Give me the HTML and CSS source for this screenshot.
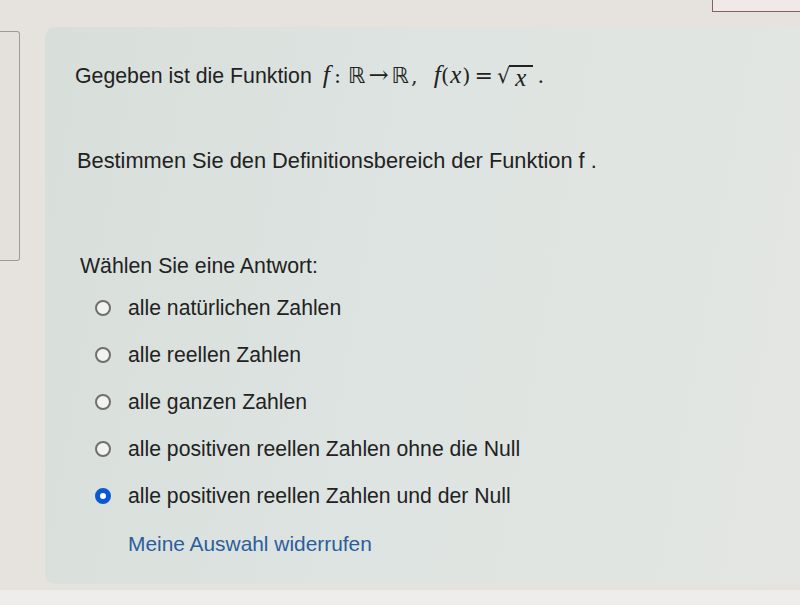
FILE: index.html
```html
<!DOCTYPE html>
<html lang="de">
<head>
<meta charset="utf-8">
<link rel="stylesheet" href="styles.css">
</head>
<body>
<div class="screen">
  <div class="side-box"></div>
  <div class="card">
    <p class="q-line first">Gegeben ist die Funktion <span class="math"><i class="mi">f</i><span class="mo colon">:</span><span class="ds">ℝ</span><span class="mo arrow">→</span><span class="ds">ℝ</span><span class="mo comma">,</span><span class="msp"></span><i class="mi">f</i><span class="mo">(</span><i class="mi x">x</i><span class="mo">)</span><span class="mo eq">=</span><span class="sqrt"><span class="rad">√</span><span class="under"><i class="mi x">x</i></span></span><span class="mo dot">.</span></span></p>
    <p class="q-line second">Bestimmen Sie den Definitionsbereich der Funktion f .</p>
    <p class="prompt">Wählen Sie eine Antwort:</p>
    <ul class="answers">
      <li class="answer"><span class="radio"></span><span>alle natürlichen Zahlen</span></li>
      <li class="answer"><span class="radio"></span><span>alle reellen Zahlen</span></li>
      <li class="answer"><span class="radio"></span><span>alle ganzen Zahlen</span></li>
      <li class="answer"><span class="radio"></span><span>alle positiven reellen Zahlen ohne die Null</span></li>
      <li class="answer"><span class="radio checked"></span><span>alle positiven reellen Zahlen und der Null</span></li>
    </ul>
    <a class="undo" href="#">Meine Auswahl widerrufen</a>
  </div>
  <div class="flag-box"></div>
</div>
</body>
</html>
```

FILE: styles.css
```css
html, body {
  margin: 0;
  padding: 0;
}
body {
  width: 800px;
  height: 605px;
  overflow: hidden;
  background: #e6e3de;
  font-family: "Liberation Sans", Arial, sans-serif;
  color: #222222;
}
.screen {
  position: relative;
  display: flex;
  align-items: flex-start;
  height: 590px;
  border-bottom: 15px solid #efede9;
}
.side-box {
  flex: 0 0 19px;
  height: 228px;
  margin-top: 31px;
  border: 1px solid #9e9c98;
  border-left: none;
  border-radius: 0 3px 3px 0;
  background: #e4e1dc;
}
.card {
  flex: 1;
  margin-left: 25px;
  margin-top: 27px;
  height: 557px;
  box-sizing: border-box;
  padding: 34px 0 0 30px;
  background: linear-gradient(100deg, #d8dfdb 0%, #dee4e1 50%, #e3e6e3 100%);
  border-radius: 10px 0 0 10px;
  display: flex;
  flex-direction: column;
  align-items: flex-start;
}
.q-line {
  margin: 0;
  font-size: 21.3px;
  line-height: 28px;
}
.second {
  margin-top: 57px;
  padding-left: 2px;
  font-size: 21.8px;
}
.math {
  font-family: "Liberation Serif", "DejaVu Serif", serif;
  font-size: 26px;
  margin-left: 5px;
}
.mi {
  font-style: italic;
}
.mi.x {
  font-size: 25px;
  padding: 0 1px;
}
.mo {
  font-family: "DejaVu Serif", serif;
  font-size: 21px;
}
.colon { margin: 0 7px 0 4px; }
.arrow { margin: 0 3px; font-size: 24px; }
.eq { margin: 0 2px 0 4px; font-size: 22px; }
.comma { margin-left: 2px; }
.dot { margin-left: 4px; }
.ds {
  font-family: "DejaVu Sans", sans-serif;
  font-size: 22px;
}
.msp {
  display: inline-block;
  width: 16px;
}
.sqrt {
  display: inline-flex;
  align-items: flex-end;
  margin-left: 2px;
}
.rad {
  font-family: "DejaVu Sans", sans-serif;
  font-size: 21px;
  line-height: 24px;
}
.under {
  border-top: 2px solid #222222;
  line-height: 21px;
  margin-left: -1px;
  padding: 0 6px 0 5px;
}
.prompt {
  margin: 77px 0 0 5px;
  font-size: 21.3px;
  line-height: 28px;
}
.answers {
  list-style: none;
  margin: 0;
  padding: 0 0 0 20px;
  display: flex;
  flex-direction: column;
  gap: 19px;
  margin-top: 14px;
}
.answer {
  display: flex;
  align-items: center;
  gap: 17px;
  font-size: 21.2px;
  line-height: 28px;
}
.radio {
  width: 12px;
  height: 12px;
  border: 2px solid #6f6f6d;
  border-radius: 50%;
  background: #f2f3f1;
  flex: 0 0 auto;
}
.radio.checked {
  width: 6px;
  height: 6px;
  border: 5px solid #0c57d6;
  background: #ffffff;
}
.undo {
  margin: 20px 0 0 53px;
  font-size: 20.9px;
  line-height: 28px;
  color: #2c5d9c;
  text-decoration: none;
}
.flag-box {
  position: absolute;
  top: -2px;
  right: -6px;
  width: 92px;
  height: 12px;
  border: 1px solid #8a5e60;
  background: #f1e9e7;
}
```
